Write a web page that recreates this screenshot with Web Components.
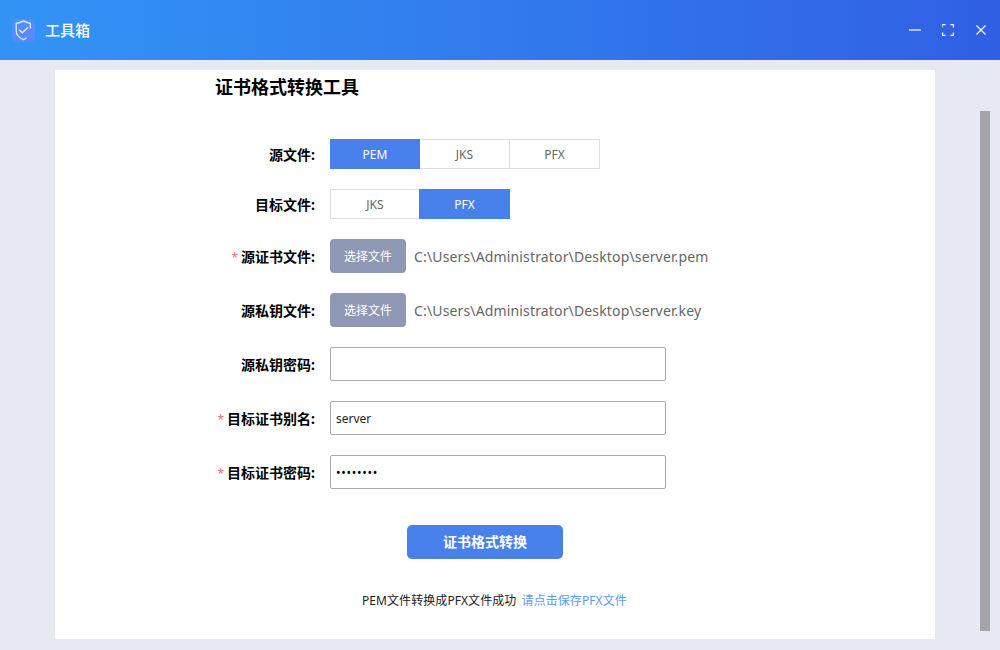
<!DOCTYPE html>
<html lang="zh-CN">
<head>
<meta charset="utf-8">
<title>工具箱</title>
<style>
    html, body { margin: 0; padding: 0; height: 100%; overflow: hidden; }
    body { font-family: "Noto Sans", "Noto Sans CJK SC", sans-serif; }
</style>
</head>
<body>
<app-window>
    <title-bar slot="bar">工具箱</title-bar>
    <convert-form></convert-form>
</app-window>

<script>
(function() {
    "use strict";

    class AppWindow extends HTMLElement {
        constructor() {
            super();
            this.attachShadow({mode: 'open'}).innerHTML = `
                <style>
                    :host { display: flex; flex-direction: column; width: 1000px; height: 650px; background: #E6E9F2; }
                    main { flex: 1; display: flex; min-height: 0; padding: 10px 10px 11px 55px; }
                    .card { width: 880px; background: #FFF; }
                    .thumb { width: 10px; margin: 41px 0 8px 45px; background: #A3A3A8; }
                </style>
                <slot name="bar"></slot>
                <main>
                    <div class="card"><slot></slot></div>
                    <div class="thumb"></div>
                </main>
            `;
        }
    }

    class TitleBar extends HTMLElement {
        constructor() {
            super();
            this.attachShadow({mode: 'open'}).innerHTML = `
                <style>
                    :host { display: flex; align-items: center; height: 60px; padding: 0 13px 0 12px; box-sizing: border-box;
                        background: linear-gradient(90deg, #3394F6 0%, #3060E4 100%); color: #FFF; }
                    .logo { width: 23px; height: 23px; margin-right: 10px; border-radius: 5px; display: block;
                        background: linear-gradient(150deg, #4C93F9, #5F86FB); }
                    .name { flex: 1; font-size: 15px; font-weight: 500; padding-bottom: 2px; }
                    .ctl { display: flex; gap: 21px; padding-bottom: 1px; }
                    svg.i { display: block; width: 12px; height: 12px; fill: none; stroke: #FFF; stroke-width: 1.2; }
                </style>
                <svg class="logo" viewBox="0 0 23 23" fill="none">
                    <path d="M18.4 9.5V4.4C16 4 14 3.2 11.6 1.9C9.2 3.2 7 4 4.2 4.4V11.5C4.2 15.8 7.4 19 11.4 20.6C12.6 20.1 13.6 19.5 14.6 18.7" stroke="#E4EDFF" stroke-width="1.2"/>
                    <path d="M7.2 10.8L10.3 13.8L16.2 8.2" stroke="#E4EDFF" stroke-width="1.3"/>
                </svg>
                <span class="name"><slot></slot></span>
                <div class="ctl">
                    <svg class="i" viewBox="0 0 12 12"><path d="M0 6H12"/></svg>
                    <svg class="i" viewBox="0 0 12 12"><path d="M0 3.5V.6H3.5M8.5 .6H11.4V3.5M11.4 8.5V11.4H8.5M3.5 11.4H.6V8.5"/></svg>
                    <svg class="i" viewBox="0 0 12 12"><path d="M1.5 1.5L10.5 10.5M10.5 1.5L1.5 10.5"/></svg>
                </div>
            `;
        }
    }

    class FormRow extends HTMLElement {
        constructor() {
            super();
            const star = this.hasAttribute('required') ? '<i>*</i>' : '';
            this.attachShadow({mode: 'open'}).innerHTML = `
                <style>
                    :host { display: flex; align-items: center; }
                    label { width: 100px; margin-right: 15px; font-size: 14px; font-weight: 700; color: #000;
                        text-align: right; white-space: nowrap; direction: rtl; }
                    label span { direction: ltr; unicode-bidi: isolate; }
                    i { font-style: normal; font-weight: 400; color: #F56C6C; margin-right: 3px; font-size: 12px; }
                </style>
                <label><span>${star}${this.getAttribute('label')}:</span></label>
                <slot></slot>
            `;
        }
    }

    class SegGroup extends HTMLElement {
        constructor() {
            super();
            const active = this.getAttribute('active');
            const items = this.getAttribute('items').split(',').map(function(name) {
                return `<div class="${name == active ? 'on' : ''}">${name}</div>`;
            }).join('');
            this.attachShadow({mode: 'open'}).innerHTML = `
                <style>
                    :host { display: flex; }
                    div { width: 90px; height: 30px; box-sizing: border-box; border: 1px solid #DDDFE8; border-left: 0;
                        font-size: 12px; line-height: 30px; text-align: center; color: #666; }
                    div:first-of-type { border-left: 1px solid #DDDFE8; }
                    div.on { width: 91px; margin-left: -1px; background: #4880EC; border: 0; line-height: 32px; color: #FFF; }
                    div.on:first-of-type { width: 90px; margin-left: 0; }
                </style>
                ${items}
            `;
        }
    }

    class FilePicker extends HTMLElement {
        constructor() {
            super();
            this.attachShadow({mode: 'open'}).innerHTML = `
                <style>
                    :host { display: flex; align-items: center; }
                    button { width: 76px; height: 34px; padding: 0; margin-right: 8px; border: 0; border-radius: 4px;
                        background: #8F99B5; color: #FFF; font: 12px "Noto Sans", "Noto Sans CJK SC", sans-serif; }
                    span { font-size: 14px; letter-spacing: .15px; color: #666; }
                </style>
                <button>选择文件</button>
                <span><slot></slot></span>
            `;
        }
    }

    class TextField extends HTMLElement {
        constructor() {
            super();
            const type = this.getAttribute('type') || 'text';
            const value = this.getAttribute('value') || '';
            this.attachShadow({mode: 'open'}).innerHTML = `
                <style>
                    :host { display: block; }
                    input { display: block; width: 336px; height: 34px; box-sizing: border-box; padding: 0 5px; margin: 0;
                        border: 1px solid #AAA; border-radius: 2px; outline: 0; background: #FFF; color: #222;
                        font: 12px "Noto Sans", "Noto Sans CJK SC", sans-serif; }
                    input[type=password] { color: #000; letter-spacing: .75px; }
                </style>
                <input type="${type}" value="${value}">
            `;
        }
    }

    class ConvertForm extends HTMLElement {
        constructor() {
            super();
            this.attachShadow({mode: 'open'}).innerHTML = `
                <style>
                    :host { display: block; padding-left: 160px; }
                    h1 { margin: 0; height: 34px; font-size: 18px; line-height: 34px; font-weight: 700; color: #000; }
                    .rows { display: flex; flex-direction: column; margin-top: 35px; }
                    form-row { margin-bottom: 20px; }
                    .go { display: block; width: 156px; height: 34px; margin: 16px 0 0 192px; padding: 0 0 2px; border: 0; border-radius: 5px;
                        background: #4880EC; color: #FFF; font: 700 14px "Noto Sans", "Noto Sans CJK SC", sans-serif; }
                    .msg { margin: 33px 0 0 147px; font-size: 12px; line-height: 18px; letter-spacing: .07px; color: #222; }
                    .msg a { margin-left: 2px; color: #5A9CF8; text-decoration: none; }
                </style>
                <h1>证书格式转换工具</h1>
                <div class="rows">
                    <form-row label="源文件"><seg-group items="PEM,JKS,PFX" active="PEM"></seg-group></form-row>
                    <form-row label="目标文件"><seg-group items="JKS,PFX" active="PFX"></seg-group></form-row>
                    <form-row required label="源证书文件"><file-picker>C:\\Users\\Administrator\\Desktop\\server.pem</file-picker></form-row>
                    <form-row label="源私钥文件"><file-picker>C:\\Users\\Administrator\\Desktop\\server.key</file-picker></form-row>
                    <form-row label="源私钥密码"><text-field type="password"></text-field></form-row>
                    <form-row required label="目标证书别名"><text-field value="server"></text-field></form-row>
                    <form-row required label="目标证书密码"><text-field type="password" value="12345678"></text-field></form-row>
                </div>
                <button class="go">证书格式转换</button>
                <div class="msg">PEM文件转换成PFX文件成功 <a href="#">请点击保存PFX文件</a></div>
            `;
        }
    }

    window.customElements.define('app-window', AppWindow);
    window.customElements.define('title-bar', TitleBar);
    window.customElements.define('form-row', FormRow);
    window.customElements.define('seg-group', SegGroup);
    window.customElements.define('file-picker', FilePicker);
    window.customElements.define('text-field', TextField);
    window.customElements.define('convert-form', ConvertForm);
})();
</script>
</body>
</html>
